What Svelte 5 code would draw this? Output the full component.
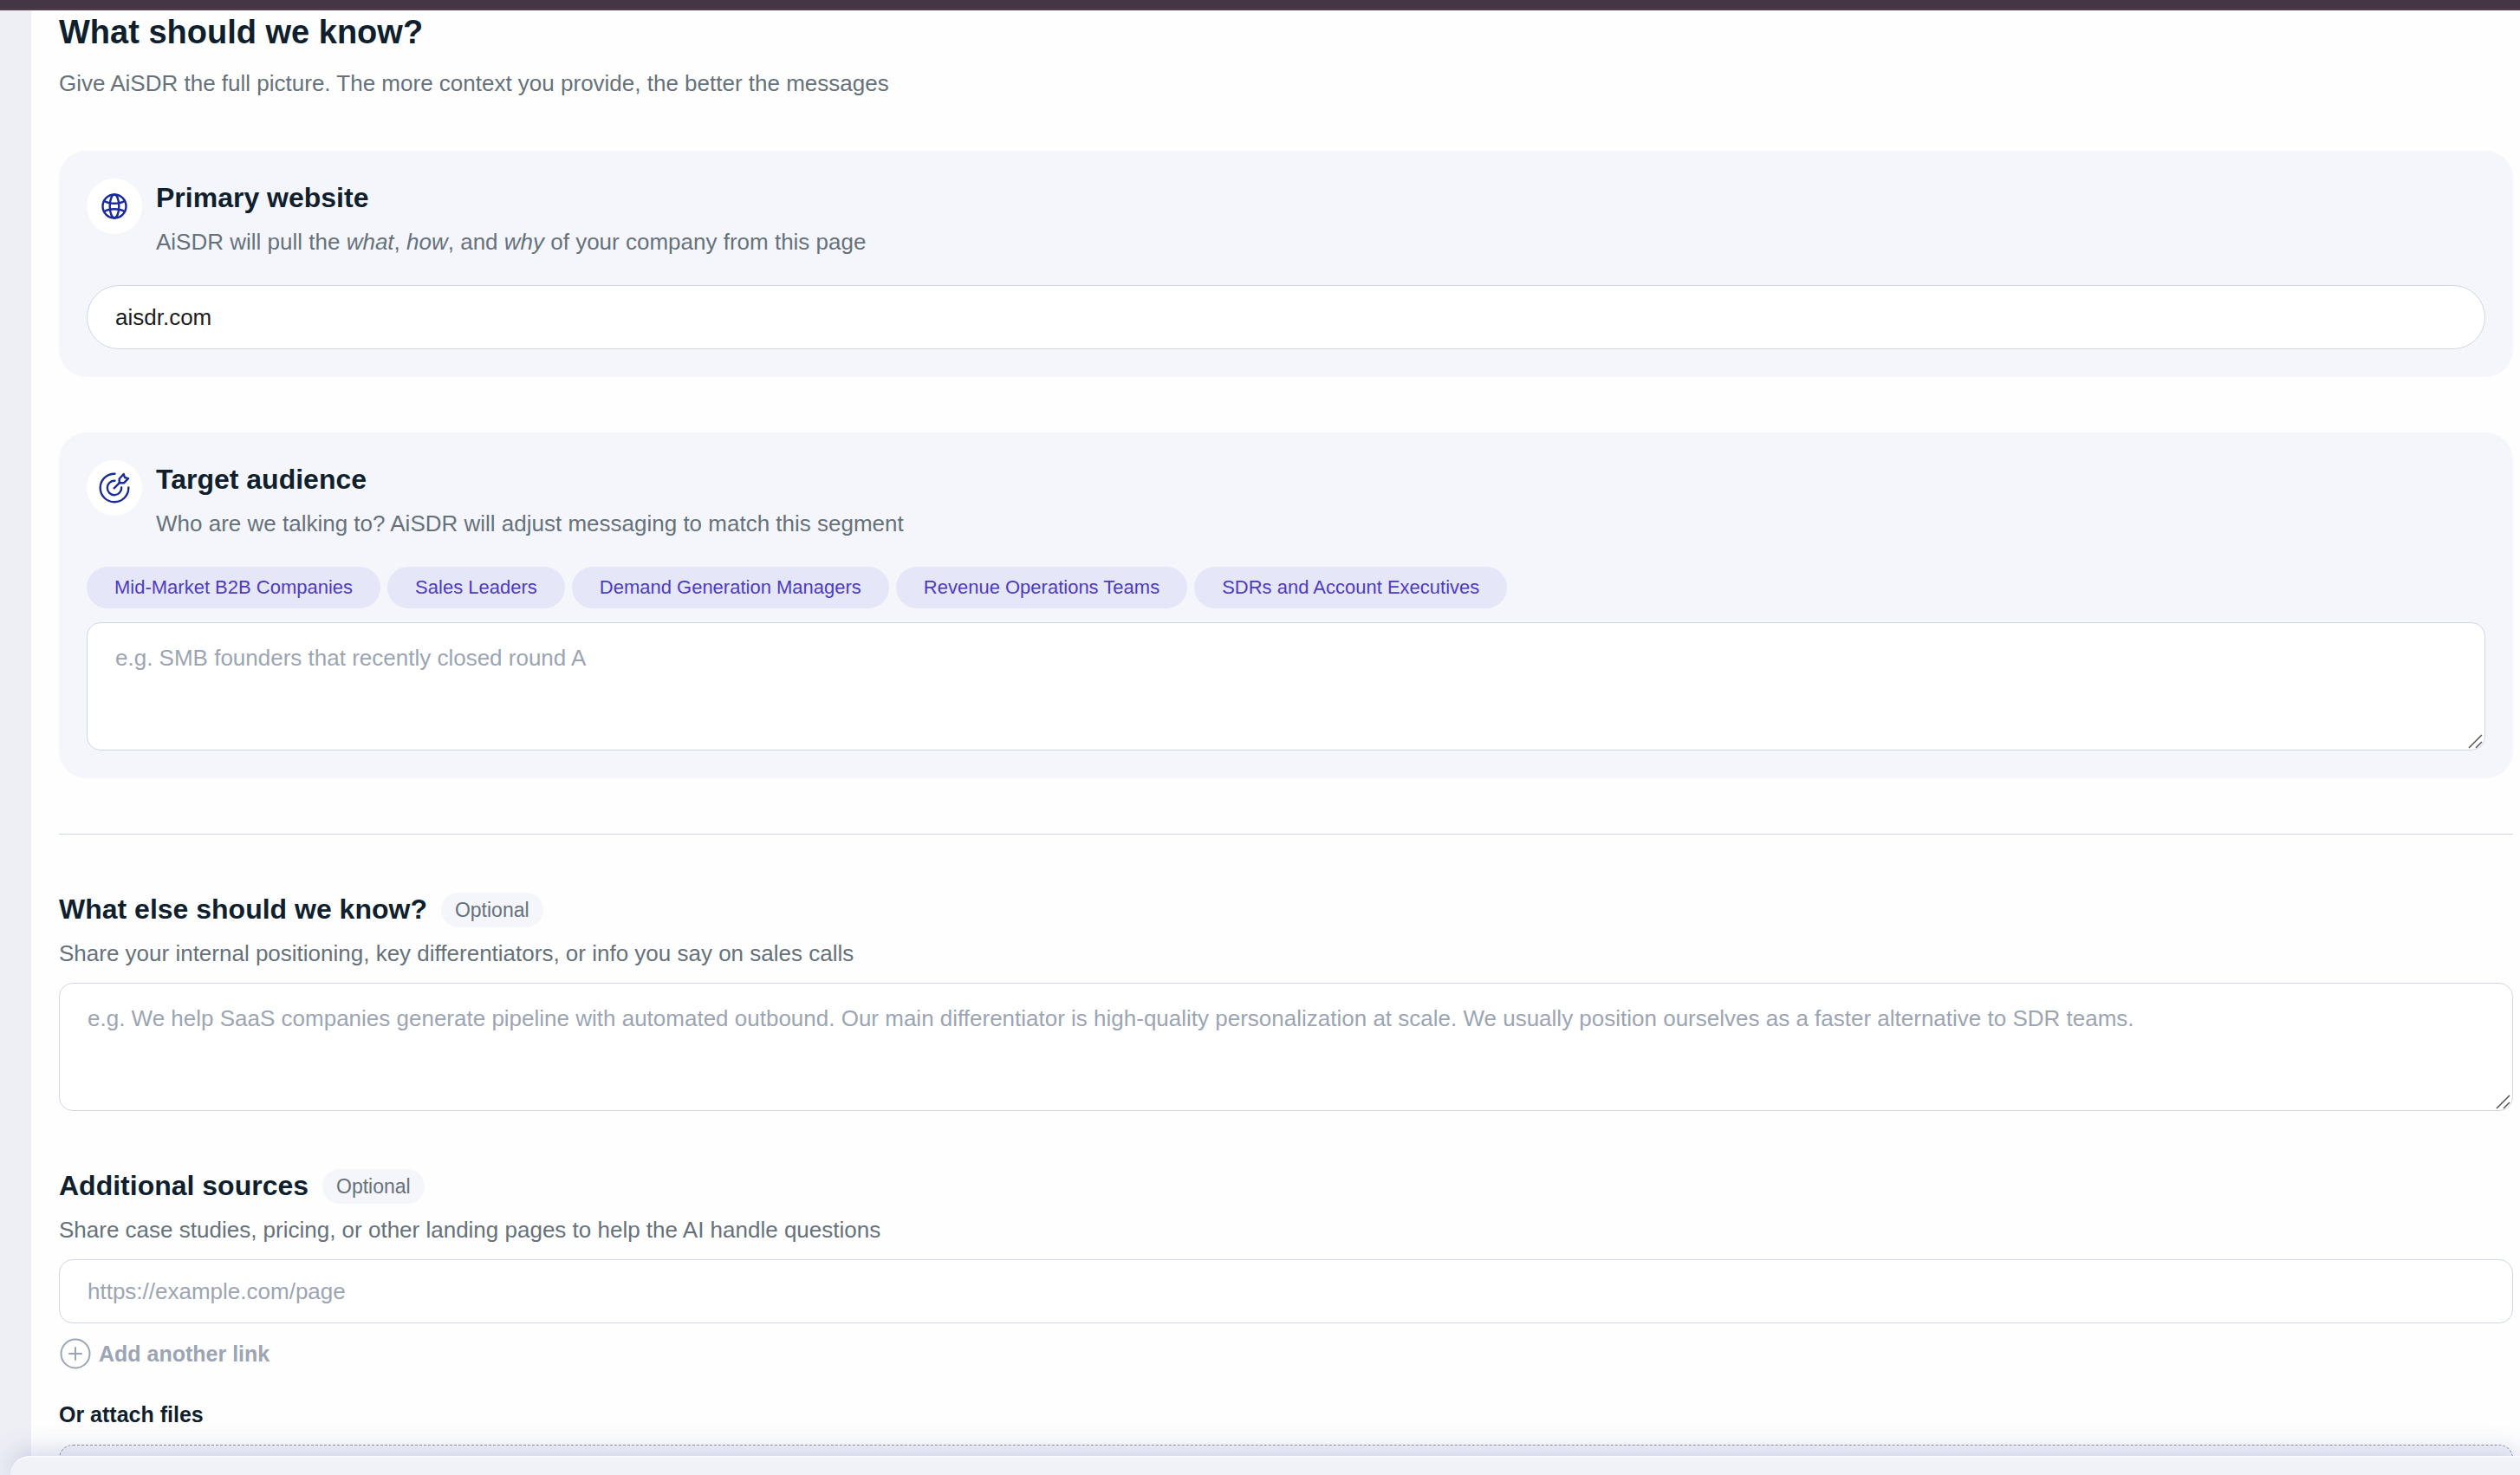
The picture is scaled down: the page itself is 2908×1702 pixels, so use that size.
<script>
	let website = 'aisdr.com';
	let audience = '';
	let details = '';
	let links = [''];

	const segments = [
		'Mid-Market B2B Companies',
		'Sales Leaders',
		'Demand Generation Managers',
		'Revenue Operations Teams',
		'SDRs and Account Executives'
	];

	function addSegment(segment) {
		audience = audience ? audience + ', ' + segment : segment;
	}

	function addLink() {
		links = [...links, ''];
	}
</script>

<div class="topbar"></div>

<div class="page">
	<main class="panel">
		<header class="intro">
			<h1>What should we know?</h1>
			<p>Give AiSDR the full picture. The more context you provide, the better the messages</p>
		</header>

		<section class="card">
			<div class="card-head">
				<span class="icon">
					<svg width="40" height="40" viewBox="0 0 40 40" fill="none" stroke="#1a2b9c" stroke-width="2.4">
						<circle cx="20" cy="20" r="13.5" />
						<ellipse cx="20" cy="20" rx="5.3" ry="13.5" />
						<path d="M8 13.800c3.200 2 7.300 3 12 3s8.800-1 12-3" />
						<path d="M8 26.200c3.200-2 7.300-3 12-3s8.800 1 12 3" />
					</svg>
				</span>
				<div>
					<h2><label for="website">Primary website</label></h2>
					<p>AiSDR will pull the <em>what</em>, <em>how</em>, and <em>why</em> of your company from this page</p>
				</div>
			</div>
			<input id="website" class="field pill" type="text" bind:value={website}>
		</section>

		<section class="card">
			<div class="card-head">
				<span class="icon">
					<svg width="40" height="40" viewBox="0 0 40 40" fill="none" stroke="#1a2b9c" stroke-width="2.4" stroke-linecap="round" stroke-linejoin="round">
						<path d="M20.500 3.700A16.300 16.300 0 1 0 36.300 19.500" />
						<path d="M20.500 11.800A8.200 8.200 0 1 0 28.200 19.500" />
						<path d="M19.700 20.300l6-6" />
						<path d="M25.700 14.300V9.500L30.700 4l1.300 4 4 1.200-5 5.100z" />
					</svg>
				</span>
				<div>
					<h2><label for="audience">Target audience</label></h2>
					<p>Who are we talking to? AiSDR will adjust messaging to match this segment</p>
				</div>
			</div>
			<div class="chips">
				{#each segments as segment}
					<button type="button" class="chip" on:click={() => addSegment(segment)}>{segment}</button>
				{/each}
			</div>
			<div class="area">
				<textarea id="audience" class="field" placeholder="e.g. SMB founders that recently closed round A" bind:value={audience}></textarea>
				<svg class="grip" width="18" height="18" viewBox="0 0 18 18" stroke="#555" stroke-width="1.5">
					<path d="M1 16L16 1M9 16L16 9" />
				</svg>
			</div>
		</section>

		<hr>

		<section class="block">
			<div class="title">
				<h2><label for="details">What else should we know?</label></h2>
				<span class="badge">Optional</span>
			</div>
			<p>Share your internal positioning, key differentiators, or info you say on sales calls</p>
			<div class="area">
				<textarea id="details" class="field" placeholder="e.g. We help SaaS companies generate pipeline with automated outbound. Our main differentiator is high-quality personalization at scale. We usually position ourselves as a faster alternative to SDR teams." bind:value={details}></textarea>
				<svg class="grip" width="18" height="18" viewBox="0 0 18 18" stroke="#555" stroke-width="1.5">
					<path d="M1 16L16 1M9 16L16 9" />
				</svg>
			</div>
		</section>

		<section class="block">
			<div class="title">
				<h2><label for="link-0">Additional sources</label></h2>
				<span class="badge">Optional</span>
			</div>
			<p>Share case studies, pricing, or other landing pages to help the AI handle questions</p>
			<div class="links">
				{#each links as link, i}
					<input id="link-{i}" class="field" type="url" aria-label="Source link {i + 1}" placeholder="https://example.com/page" bind:value={link}>
				{/each}
			</div>
			<button type="button" class="add" on:click={addLink}>
				<svg width="38" height="38" viewBox="0 0 38 38" fill="none" stroke="#9ca5b3" stroke-width="2" stroke-linecap="round">
					<circle cx="19" cy="19" r="16.5" />
					<path d="M19 12v14M12 19h14" />
				</svg>
				Add another link
			</button>
			<label class="attach" for="files">Or attach files</label>
			<div class="dropzone">
				<input id="files" type="file" multiple>
			</div>
		</section>
	</main>
</div>

<footer class="dock"></footer>

<style>
	:global(body) {
		background: #eeeff5;
		font-family: "Liberation Sans", Arial, sans-serif;
		font-size: 26px;
		line-height: 36px;
		color: #0f1f2e;
	}

	:global(#app) {
		height: 100vh;
		overflow: hidden;
	}

	.topbar {
		box-sizing: border-box;
		height: 12px;
		background: #443644;
		border-bottom: 2px solid #503e4b;
	}

	.page {
		padding-left: 36px;
	}

	.panel {
		padding: 0 8px 0 32px;
		background: #fefefe;
	}

	h1,
	h2,
	p {
		margin: 0;
	}

	h1 {
		font-size: 38px;
		line-height: 50px;
	}

	h2 {
		font-size: 32px;
		line-height: 45px;
	}

	p {
		color: #66727b;
	}

	.intro {
		margin-bottom: 60px;
	}

	.intro p {
		margin-top: 16px;
	}

	.card {
		margin-bottom: 64px;
		padding: 32px;
		border-radius: 32px;
		background: #f5f6fb;
	}

	.card-head {
		display: flex;
		gap: 16px;
		margin-bottom: 32px;
	}

	.card-head p {
		margin-top: 10px;
	}

	.icon {
		display: flex;
		align-items: center;
		justify-content: center;
		width: 64px;
		height: 64px;
		border-radius: 50%;
		background: #fff;
	}

	.field {
		display: block;
		box-sizing: border-box;
		width: 100%;
		height: 74px;
		padding: 0 32px;
		border: 1px solid #ced7ea;
		border-radius: 16px;
		background: #fff;
		font: inherit;
		color: #1c1c1c;
		outline: none;
	}

	.field::placeholder {
		color: #9ca5b3;
		opacity: 1;
	}

	.pill {
		border-radius: 37px;
	}

	textarea.field {
		height: 148px;
		padding: 22px 32px;
		resize: none;
	}

	.area {
		position: relative;
	}

	.grip {
		position: absolute;
		right: 2px;
		bottom: 1px;
	}

	.chips {
		display: flex;
		flex-wrap: wrap;
		gap: 8px;
		margin-bottom: 16px;
	}

	.chip {
		height: 48px;
		padding: 0 32px;
		border: 0;
		border-radius: 24px;
		background: #e6e6f9;
		font: inherit;
		font-size: 22px;
		color: #4c3bc2;
		cursor: pointer;
	}

	hr {
		height: 1px;
		margin: 64px 0;
		border: 0;
		background: #ced7ea;
	}

	.block {
		margin-bottom: 64px;
	}

	.title {
		display: flex;
		align-items: center;
		gap: 16px;
	}

	.badge {
		padding: 2px 16px;
		border-radius: 20px;
		background: #f5f6fb;
		font-size: 23px;
		color: #66727b;
	}

	.block p {
		margin: 10px 0 16px;
	}

	.links {
		display: grid;
		gap: 16px;
	}

	.add {
		display: flex;
		align-items: center;
		gap: 8px;
		margin: 16px 0 32px;
		padding: 0;
		border: 0;
		background: none;
		font: inherit;
		font-size: 25px;
		font-weight: bold;
		color: #9ca5b3;
		cursor: pointer;
	}

	.attach {
		display: block;
		margin-bottom: 16px;
		font-size: 25px;
		line-height: 38px;
		font-weight: bold;
	}

	.dropzone {
		height: 240px;
		border: 1px dashed #8e95a6;
		border-radius: 16px;
		background: #f5f6fb;
	}

	.dropzone input {
		width: 100%;
		height: 100%;
		opacity: 0;
	}

	.dock {
		position: fixed;
		right: 0;
		bottom: 0;
		left: 12px;
		box-sizing: border-box;
		height: 22px;
		border-top: 2px solid #f9fafd;
		border-radius: 30px 0 0 0;
		background: #f1f2f8;
		box-shadow: 0 0 32px rgba(60, 80, 160, 0.35);
	}
</style>
